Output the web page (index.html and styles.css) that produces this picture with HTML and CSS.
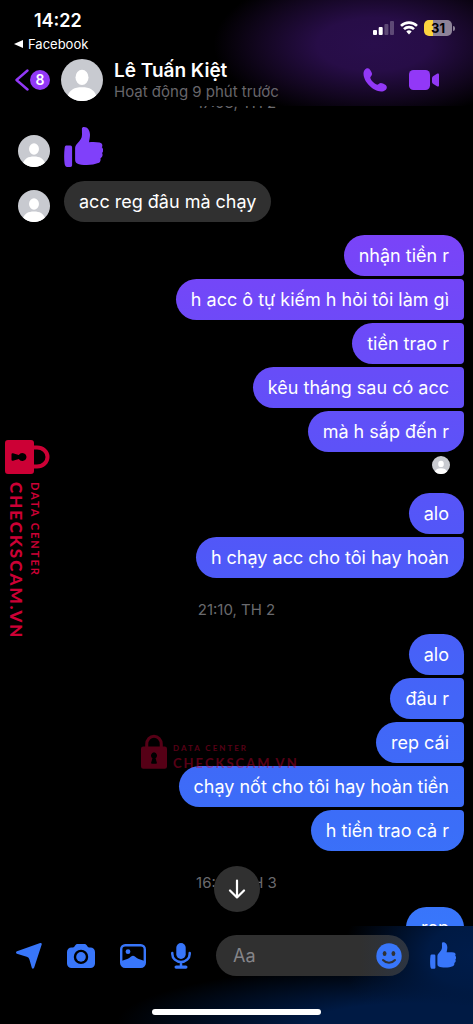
FILE: index.html
```html
<!DOCTYPE html>
<html lang="vi">
<head>
<meta charset="utf-8">
<meta name="viewport" content="width=device-width, initial-scale=1">
<title>Lê Tuấn Kiệt</title>
<link rel="stylesheet" href="styles.css">
</head>
<body>
<svg class="defs" aria-hidden="true">
  <symbol id="person" viewBox="0 0 40 40">
    <circle cx="20" cy="20" r="20" fill="#c8cad0"/>
    <ellipse cx="20" cy="17.5" rx="6.2" ry="7.2" fill="#fff"/>
    <path d="M6.500 34.800C8.500 29.500 12.500 27 20 27s11.500 2.500 13.500 7.800A20 20 0 0 1 6.500 34.800z" fill="#fff"/>
  </symbol>
  <symbol id="thumb" viewBox="0 0 39 40">
    <path d="M2.200 18.500h4.200a1.700 1.700 0 0 1 1.700 1.700v18.100a1.700 1.700 0 0 1-1.700 1.700H3.200c-1.600 0-2.300-1.300-2.600-3.200C0 32.500 0 25.500.6 21.400c.2-1.800.6-2.900 1.600-2.900z"/>
    <path d="M17.900 1.800c0-1.300.9-1.800 2.100-1.800 3.600 0 6 3.500 6 7.800 0 2.900-.7 5-1 7.400 3.600-.4 7.800-.3 10.600.3 2.500.5 3.500 2.800 2.200 4.800 1.600 1.300 1.900 4 .3 5.600 1 1.900.4 4.400-1.600 5.300.4 2.500-.4 4.300-2.400 4.900-2.900 1.300-6.800 1.900-11.300 1.900-4 0-7.500-.4-9.600-1.500-1.700-.9-2.100-2.300-2.100-4.600V21.500c0-2.400.8-3.400 2.400-5.200 2.600-2.900 4.500-5 4.500-8.500 0-2.300-.1-4-.1-6z"/>
  </symbol>
  <symbol id="lock" viewBox="0 0 34 45">
    <path d="M7.500 18v-5a9.500 10.500 0 0 1 19 0v5" fill="none" stroke="currentColor" stroke-width="4"/>
    <path fill="currentColor" fill-rule="evenodd" d="M3 16h28a3 3 0 0 1 3 3v23a3 3 0 0 1-3 3H3a3 3 0 0 1-3-3V19a3 3 0 0 1 3-3zm14 7.500a4.200 4.200 0 0 0-2 7.700L13.300 37q-.3 1.500 1 1.500h5.400q1.300 0 1-1.500L19 31.200a4.200 4.200 0 0 0-2-7.700z"/>
  </symbol>
</svg>

<div class="app">
  <header class="top">
    <div class="status">
      <div class="clock">
        <time>14:22</time>
        <a class="back-app" href="#"><svg viewBox="0 0 9 8" width="9" height="8"><path d="M9 0v8L0 4z" fill="currentColor"/></svg>Facebook</a>
      </div>
      <div class="indicators">
        <svg width="21" height="14" viewBox="0 0 21 14" fill="#fff"><rect y="9" width="4" height="5" rx="1"/><rect x="5.700" y="6" width="4" height="8" rx="1"/><rect x="11.400" y="3" width="4" height="11" rx="1" opacity=".25"/><rect x="17" width="4" height="14" rx="1" opacity=".25"/></svg>
        <svg width="18" height="14" viewBox="0 0 18 14" fill="none" stroke="#fff" stroke-width="2.600"><path d="M1 4.900a11.500 11.500 0 0 1 16 0"/><path d="M4 8.200a7 7 0 0 1 10 0"/><path d="M9 13.600l-2.700-3a3.800 3.800 0 0 1 5.400 0z" fill="#fff" stroke="none"/></svg>
        <span class="battery"><span class="battery-level">31</span></span>
      </div>
    </div>
    <div class="contact">
      <button class="back" aria-label="Back"><svg width="14" height="22" viewBox="0 0 14 22" fill="none" stroke="currentColor" stroke-width="2.400" stroke-linecap="round" stroke-linejoin="round"><path d="M12.500 1.500L1.500 11l11 9.500"/></svg><span class="unread">8</span></button>
      <svg class="avatar-large"><use href="#person"/></svg>
      <div class="who">
        <h1>Lê Tuấn Kiệt</h1>
        <p>Hoạt động 9 phút trước</p>
      </div>
      <div class="calls">
        <button aria-label="Call"><svg width="24" height="24" viewBox="0 0 24 24" fill="currentColor"><path d="M.5 5.800C.5 2.700 2.200.2 4.700.2c1.200 0 1.900.7 2.700 2l1 1.800c1 1.800.8 3-.4 4.300-.9 1-.9 1.500-.3 2.600 1.300 2.300 3.100 4.100 5.400 5.400 1.100.6 1.600.6 2.600-.3 1.300-1.200 2.500-1.400 4.300-.4l1.800 1c1.300.8 2 1.500 2 2.700 0 2.500-2.500 4.200-5.600 4.200C10.200 23.500.5 13.800.5 5.800z"/></svg></button>
        <button aria-label="Video call"><svg width="30" height="20" viewBox="0 0 30 20" fill="currentColor"><rect width="21" height="20" rx="4.500"/><path d="M23 8.200c0-.9.300-1.400 1-2l4-2.400c1.100-.7 2-.2 2 1v10.400c0 1.200-.9 1.700-2 1l-4-2.400c-.7-.6-1-1.100-1-2z"/></svg></button>
      </div>
    </div>
  </header>

  <main class="chat">
    <div class="watermark watermark-side">
      <svg class="lock"><use href="#lock"/></svg>
      <div class="mark-text"><span class="mark-small">DATA CENTER</span><span class="mark-name">CHECKSCAM.VN</span></div>
    </div>
    <div class="watermark watermark-center">
      <svg class="lock"><use href="#lock"/></svg>
      <div class="mark-text"><span class="mark-small">DATA CENTER</span><span class="mark-name">CHECKSCAM.VN</span></div>
    </div>

    <time class="date date-first">17:08, TH 2</time>
    <div class="received">
      <svg class="avatar"><use href="#person"/></svg>
      <svg class="big-thumb"><use href="#thumb"/></svg>
    </div>
    <div class="received">
      <svg class="avatar"><use href="#person"/></svg>
      <p class="bubble">acc reg đâu mà chạy</p>
    </div>
    <div class="sent">
      <p class="bubble">nhận tiền r</p>
      <p class="bubble">h acc ô tự kiếm h hỏi tôi làm gì</p>
      <p class="bubble">tiền trao r</p>
      <p class="bubble">kêu tháng sau có acc</p>
      <p class="bubble">mà h sắp đến r</p>
    </div>
    <svg class="seen"><use href="#person"/></svg>
    <div class="sent">
      <p class="bubble">alo</p>
      <p class="bubble">h chạy acc cho tôi hay hoàn</p>
    </div>
    <time class="date">21:10, TH 2</time>
    <div class="sent">
      <p class="bubble">alo</p>
      <p class="bubble">đâu r</p>
      <p class="bubble">rep cái</p>
      <p class="bubble">chạy nốt cho tôi hay hoàn tiền</p>
      <p class="bubble">h tiền trao cả r</p>
    </div>
    <time class="date">16:05, TH 3</time>
    <div class="sent">
      <p class="bubble">rep</p>
    </div>
    <button class="jump" aria-label="Scroll to latest"><svg width="18" height="20" viewBox="0 0 18 20" fill="none" stroke="currentColor" stroke-width="2.200" stroke-linecap="round" stroke-linejoin="round"><path d="M9 1.500v17M2 11.500l7 7 7-7"/></svg></button>
  </main>

  <footer class="composer">
    <div class="tools">
      <button aria-label="Location"><svg width="26" height="26" viewBox="0 0 26 26" fill="currentColor"><path d="M24.200.1c1.200-.3 1.800.3 1.500 1.500l-7.500 23c-.4 1.400-1.900 1.400-2.400.1l-2.300-8c-.4-1.600-1.200-2.500-2.800-3L.9 10.700c-1.200-.4-1.200-2 .1-2.400z"/></svg></button>
      <button aria-label="Camera"><svg width="28" height="24" viewBox="0 0 28 24" fill="currentColor"><path fill-rule="evenodd" d="M10.800 0h6.400c1.200 0 1.800.4 2.500 1.300l1 1.400c.4.500.8.700 1.500.7h1.300A4.500 4.500 0 0 1 28 7.900v11.600a4.500 4.500 0 0 1-4.500 4.500h-19A4.500 4.500 0 0 1 0 19.500V7.900a4.500 4.500 0 0 1 4.500-4.500h1.300c.7 0 1.100-.2 1.500-.7l1-1.400C9 .4 9.600 0 10.800 0zM14 5.700a7.200 7.200 0 1 0 0 14.400 7.200 7.200 0 0 0 0-14.400z"/><circle cx="14" cy="12.900" r="4.800"/></svg></button>
      <button aria-label="Gallery"><svg width="26" height="24" viewBox="0 0 26 24" fill="currentColor"><rect x="1.200" y="1.200" width="23.600" height="21.600" rx="4" fill="none" stroke="currentColor" stroke-width="2.400"/><circle cx="8" cy="7.700" r="2.400"/><path d="M2 16.800l4.500-1.500c1-.3 1.800-.7 2.700-1.400l1.900-1.500c1.200-1 2.600-1 3.800 0l1.900 1.500c.9.700 1.700 1.100 2.700 1.400l4.500 1.500V22a1 1 0 0 1-1 1H3a1 1 0 0 1-1-1z"/></svg></button>
      <button aria-label="Voice"><svg width="20" height="26" viewBox="0 0 20 26" fill="currentColor"><rect x="5.300" y="0" width="9.400" height="16" rx="4.700"/><path d="M1.300 10v1a8.700 8 0 0 0 17.400 0v-1M10 19v4" fill="none" stroke="currentColor" stroke-width="2.500" stroke-linecap="round"/><rect x="3.500" y="22.500" width="13" height="3.200" rx="1.600"/></svg></button>
      <div class="field">
        <input type="text" placeholder="Aa" aria-label="Aa">
        <button aria-label="Emoji"><svg width="26" height="26" viewBox="0 0 26 26"><circle cx="13" cy="13" r="12.700" fill="currentColor"/><g fill="#303236"><ellipse cx="8.600" cy="10.600" rx="1.900" ry="2.500"/><ellipse cx="17.400" cy="10.600" rx="1.900" ry="2.500"/></g><path d="M7 17c3.200 3.600 8.800 3.600 12 0" fill="none" stroke="#303236" stroke-width="2" stroke-linecap="round"/></svg></button>
      </div>
      <button aria-label="Like"><svg class="small-thumb"><use href="#thumb"/></svg></button>
    </div>
    <div class="home-bar"></div>
  </footer>
</div>
</body>
</html>
```
FILE: styles.css
```css
* { box-sizing: border-box; }

body {
  margin: 0;
  background: #000;
  color: #fff;
  font-family: Inter, "Noto Sans", sans-serif;
}

h1, p { margin: 0; font-weight: 400; }

svg { display: block; flex: none; }

button {
  display: flex;
  align-items: center;
  flex: none;
  padding: 0;
  border: 0;
  background: none;
  color: inherit;
  font: inherit;
}

.defs { position: absolute; width: 0; height: 0; }

.app {
  display: flex;
  flex-direction: column;
  height: 100vh;
  overflow: hidden;
}

/* Header */
.top {
  position: relative;
  z-index: 1;
  flex: none;
  padding-bottom: 5px;
  background: radial-gradient(ellipse 160px 76px at 79% 42%, #290e4c 0%, #270d47 35%, #12061f 72%, #000 100%) #000;
}

.status {
  display: flex;
  justify-content: space-between;
  padding: 10px 18px 0 14px;
}

.clock time {
  display: block;
  padding-left: 20px;
  font-size: 18px;
  font-weight: 600;
  line-height: 22px;
}

.back-app {
  display: flex;
  align-items: center;
  gap: 5px;
  margin-top: 2px;
  color: inherit;
  font-size: 13px;
  line-height: 20px;
  text-decoration: none;
}

.indicators {
  display: flex;
  align-items: center;
  gap: 6px;
  height: 36px;
}

.battery {
  display: flex;
  align-items: center;
  gap: 1px;
}

.battery::after {
  width: 2px;
  height: 5px;
  border-radius: 0 2px 2px 0;
  background: #8d8398;
  content: "";
}

.battery-level {
  width: 28px;
  border-radius: 5px;
  background: linear-gradient(90deg, #fcd53f 32%, #8d8398 32%);
  color: #000;
  font-size: 13px;
  font-weight: 700;
  line-height: 16px;
  text-align: center;
}

.contact {
  display: flex;
  align-items: center;
  padding: 5px 34px 0 15px;
}

.back { gap: 1px; color: #9238f7; }

.unread {
  width: 20px;
  border-radius: 50%;
  background: #9238f7;
  color: #fff;
  font-size: 14px;
  font-weight: 600;
  line-height: 20px;
  text-align: center;
}

.avatar-large { width: 42px; height: 42px; margin-left: 11px; }

.who { flex: 1; min-width: 0; margin-left: 11px; white-space: nowrap; }

.who h1 { font-size: 19px; font-weight: 600; line-height: 24px; }

.who p { color: #68666b; font-size: 15px; line-height: 18px; }

.calls {
  display: flex;
  align-items: center;
  gap: 22px;
  color: #9238f7;
}

/* Conversation */
.chat {
  position: relative;
  display: flex;
  flex: 1;
  flex-direction: column;
  min-height: 0;
  overflow: hidden;
}

.chat > * { flex: none; }

.date {
  align-self: center;
  margin: 22px 0 14px;
  color: #6a6a6e;
  font-size: 15px;
  line-height: 20px;
}

.date-first { margin: -13px 0 14px; }

.received {
  display: flex;
  align-items: flex-end;
  gap: 14px;
  margin-bottom: 14px;
  padding-left: 18px;
}

.received:has(+ .sent) { margin-bottom: 13px; }

.avatar { width: 32px; height: 32px; }

.big-thumb { width: 39px; height: 40px; fill: #8040fa; }

.bubble {
  padding: 8px 15px;
  border-radius: 21px;
  background: #303030;
  font-size: 18px;
  line-height: 25px;
  white-space: nowrap;
}

.sent {
  display: flex;
  flex-direction: column;
  align-items: flex-end;
  gap: 3px;
  padding-right: 9px;
}

/* One gradient spans the window, so a bubble's colour depends on its height */
.sent .bubble {
  border-radius: 21px 4px 4px 21px;
  background: linear-gradient(#9238f7 8%, #7745f8 25%, #5f51f8 42%, #5058f8 54%, #4365f8 68%, #3b6ef8 81%, #3876fb 90%) fixed;
}

.sent .bubble:first-child { border-top-right-radius: 21px; }

.sent .bubble:last-child { border-bottom-right-radius: 21px; }

.seen {
  align-self: flex-end;
  width: 18px;
  height: 18px;
  margin: 4px 23px 19px 0;
}

.jump {
  position: absolute;
  bottom: 14px;
  left: 50%;
  justify-content: center;
  width: 46px;
  height: 46px;
  border-radius: 50%;
  background: #303030;
  transform: translateX(-50%);
}

/* Watermarks */
.watermark {
  position: absolute;
  display: flex;
  color: #cc0035;
  font-family: Lato, sans-serif;
  font-weight: 700;
  white-space: nowrap;
}

.mark-text { display: flex; flex-direction: column; }

.watermark-side {
  top: 334px;
  left: 50px;
  gap: 8px;
  transform: rotate(90deg);
  transform-origin: 0 0;
}

.watermark-side .lock { width: 34px; height: 45px; }

.watermark-side .mark-small {
  margin-top: 8px;
  font-size: 11px;
  letter-spacing: 2px;
  line-height: 14px;
}

.watermark-side .mark-name {
  font-size: 17px;
  font-weight: 900;
  letter-spacing: 2px;
  line-height: 24px;
}

.watermark-center {
  top: 628px;
  left: 141px;
  gap: 6px;
  opacity: .42;
}

.watermark-center .lock { width: 26px; height: 35px; }

.watermark-center .mark-small {
  margin-top: 8px;
  font-size: 8px;
  letter-spacing: 2px;
  line-height: 12px;
}

.watermark-center .mark-name {
  font-size: 13px;
  letter-spacing: 2px;
  line-height: 18px;
}

/* Composer */
.composer {
  position: relative;
  flex: none;
  padding: 9px 17px 9px 16px;
  background:
    radial-gradient(ellipse 130px 90px at 100% 30%, #001c4a 0%, #001a44 35%, transparent 100%),
    radial-gradient(ellipse 300px 60px at 88% 100%, #001a44 0%, #001a44 35%, transparent 100%),
    #000;
  color: #3876fa;
}

.tools {
  display: flex;
  align-items: center;
  gap: 25px;
}

.field {
  display: flex;
  flex: 1;
  align-items: center;
  min-width: 0;
  margin-right: -4px;
  padding-right: 7px;
  border-radius: 21px;
  background: linear-gradient(90deg, #303030 75%, #2c3441);
}

.field input {
  flex: 1;
  min-width: 0;
  padding: 8px 17px;
  border: 0;
  outline: 0;
  background: none;
  color: #fff;
  font: 18px/25px Inter, "Noto Sans", sans-serif;
}

.field input::placeholder { color: #858589; opacity: 1; }

.small-thumb { width: 26px; height: 27px; fill: currentColor; }

.home-bar {
  width: 169px;
  height: 6px;
  margin: 33px auto 0;
  border-radius: 3px;
  background: #fff;
}
```
